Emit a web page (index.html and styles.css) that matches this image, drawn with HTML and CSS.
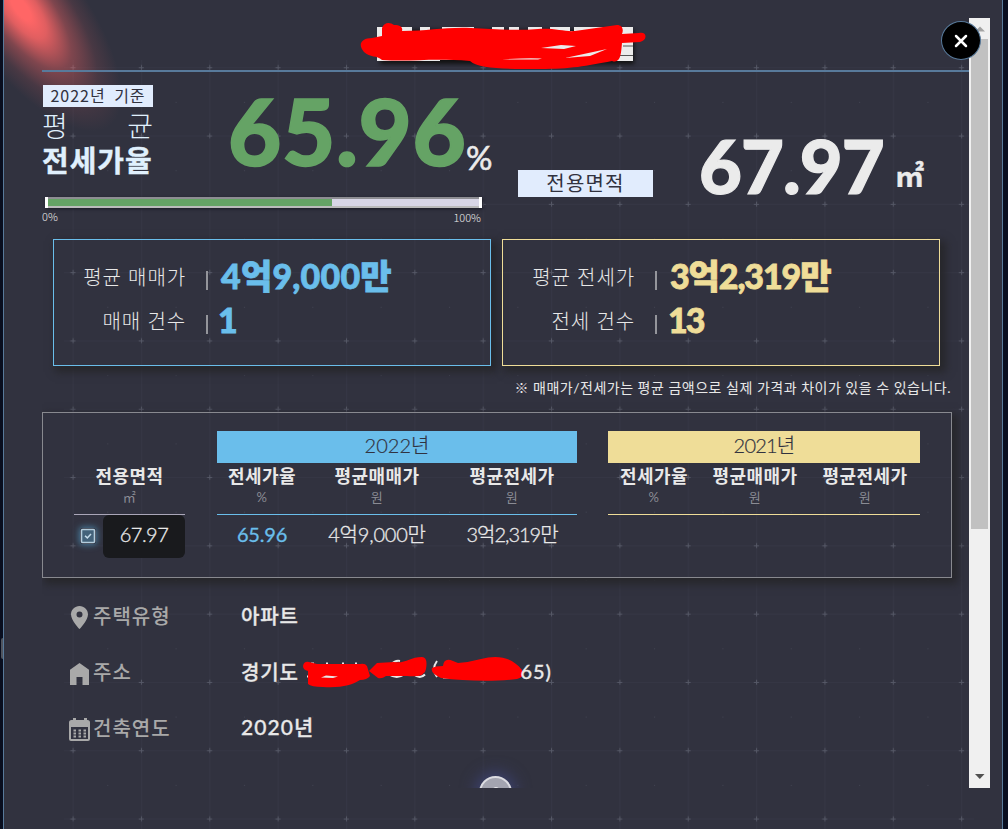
FILE: index.html
```html
<!DOCTYPE html>
<html lang="ko">
<head>
    <meta charset="UTF-8">
    <meta name="viewport" content="width=device-width, initial-scale=1.0">
    <title>전세가율</title>
    <link rel="stylesheet" href="styles.css">
</head>
<body>
    <div class="modal">
        <svg class="grid-bg" width="998" height="829">
            <defs>
                <pattern id="grid" x="34.9" y="33.6" width="68.35" height="68.3" patternUnits="userSpaceOnUse">
                    <path d="M34.2 0v68.3M0 34.1h68.35" stroke="#8b92b5" stroke-opacity=".05"/>
                    <path d="M34.2 31.5v5M31.5 34.1h5" stroke="#a0a5b8" stroke-opacity=".3"/>
                    <path d="M0 0h1v1h-1z" fill="#a0a5b8" fill-opacity=".15"/>
                </pattern>
            </defs>
            <rect x="60" y="60" width="910" height="769" fill="url(#grid)"/>
        </svg>
        <div class="glow"></div>

        <div class="scroll-area">
            <div class="content">
                <header class="title">
                    <svg class="title-mark" width="290" height="46" viewBox="0 0 290 46">
                        <path class="mark-shadow" d="M20 8h254v34H20z"/>
                        <path d="M17 5h35v4h8V5h10v4h12V5h32v4h18V5h12v4h5V5h10v4h9V5h14v4h8V5h20v4h4V5h59v34H170v-1h-90v1H17z" fill="#ebebeb"/>
                        <path d="M263 24h10M257 33.500h16" stroke="#555"/>
                        <path class="scribble" d="M22 6C24 0 30 0 34 3C41 3 43 6 42 9C70 9 84 5 111 6C135 7 155 9 178 7C195 6 205 10 215 9L257 3C262 3 264 7 262 12L279 11C287 9 288 18 280 20L262 21C261 31 261 42 252 39C226 44 211 47 180 47C145 47 119 47 110 39C70 36 52 40 22 38C17 33 10 36 4 30C-3 22 2 16 12 16L22 14Z"/>
                        <path d="M181 26l20-3 15 1-12 3zM142 37.500q25-2 40-1l-4 1zM205 36l42-9-17 7z" fill="#ebebeb"/>
                    </svg>
                </header>

                <section class="summary">
                    <div class="rate">
                        <div class="rate-top">
                            <div class="rate-label">
                                <span class="base-year">2022년 기준</span>
                                <span class="avg"><span>평</span><span>균</span></span>
                                <strong>전세가율</strong>
                            </div>
                            <div class="rate-value">65.96</div>
                            <span class="percent">%</span>
                        </div>
                        <div class="bar"><div class="bar-fill" style="width: 65.96%"></div></div>
                        <div class="bar-scale"><span>0%</span><span class="max">100%</span></div>
                    </div>
                    <div class="area">
                        <span class="area-label">전용면적</span>
                        <span class="area-value">67.97</span>
                        <span class="area-unit">㎡</span>
                    </div>
                </section>

                <section class="cards">
                    <div class="card blue">
                        <div class="card-row"><span class="name">평균 매매가</span><i></i><b>4억9,000만</b></div>
                        <div class="card-row"><span class="name">매매 건수</span><i></i><b class="single">1</b></div>
                    </div>
                    <div class="card yellow">
                        <div class="card-row"><span class="name">평균 전세가</span><i></i><b class="jeonse">3억2,319만</b></div>
                        <div class="card-row"><span class="name">전세 건수</span><i></i><b class="count">13</b></div>
                    </div>
                </section>
                <p class="notice">※ 매매가/전세가는 평균 금액으로 실제 가격과 차이가 있을 수 있습니다.</p>

                <section class="history">
                    <div class="group group-area">
                        <div class="year"></div>
                        <div class="cols"><div class="col">전용면적<small>㎡</small></div></div>
                        <div class="values">
                            <span class="check">
                                <svg width="16" height="16" viewBox="0 0 16 16"><rect x="1.5" y="1.5" width="13" height="13" rx="1" fill="#43627a" stroke="#b4cddd" stroke-width="1.6"/><path d="M5 7.7l2.3 2.2L11 6" fill="none" stroke="#c5dbea" stroke-width="1.5"/></svg>
                            </span>
                            <span class="selected">67.97</span>
                        </div>
                    </div>
                    <div class="group group-2022">
                        <div class="year">2022년</div>
                        <div class="cols">
                            <div class="col">전세가율<small>%</small></div>
                            <div class="col">평균매매가<small>원</small></div>
                            <div class="col">평균전세가<small>원</small></div>
                        </div>
                        <div class="values">
                            <span class="active">65.96</span>
                            <span>4억9,000만</span>
                            <span class="jeonse-cell">3억2,319만</span>
                        </div>
                    </div>
                    <div class="group group-2021">
                        <div class="year">2021년</div>
                        <div class="cols">
                            <div class="col">전세가율<small>%</small></div>
                            <div class="col">평균매매가<small>원</small></div>
                            <div class="col">평균전세가<small>원</small></div>
                        </div>
                        <div class="values"></div>
                    </div>
                </section>

                <dl class="info">
                    <div class="info-row">
                        <dt>
                            <svg width="24" height="26" viewBox="0 0 24 26"><path fill-rule="evenodd" d="M12.500 2C7.800 2 4 5.700 4 10.400 4 16.300 12.500 25 12.500 25S21 16.300 21 10.400C21 5.700 17.200 2 12.500 2zm0 5.500a3 3 0 1 1 0 6 3 3 0 0 1 0-6z"/></svg>
                            주택유형
                        </dt>
                        <dd>아파트</dd>
                    </div>
                    <div class="info-row">
                        <dt>
                            <svg width="24" height="26" viewBox="0 0 24 26"><path d="M12.500 3L3 9.800V25h6.500v-8h6v8H22V9.800z"/></svg>
                            주소
                        </dt>
                        <dd class="address">
                            경기도
                            <svg width="222" height="34" viewBox="0 0 222 34">
                                <path d="M4 20.500h3M8 7.500h3m12 0h2m14 0h2m11 0h2M20 21h20" stroke="#e8e8e8" stroke-width="2"/>
                                <path d="M86 18.500q8 5 15 0M111 18.500q6 5 11 0M89 8q3-4 8-3" fill="none" stroke="#e8e8e8" stroke-width="2"/>
                                <path d="M134 5q-6 8 0 16M140 21.500h13" fill="none" stroke="#e8e8e8" stroke-width="2"/>
                                <path class="scribble" d="M6 6Q1 5 0 10Q0 14 5 15Q5 23 5 28Q8 31 20 31C39 32 49 29 57 24Q64 24 67 20L64 10Q62 7 57 8L14 8ZM66 15L75 22Q79 23 83 20L104 20Q122 22 123 13Q125 1 119 1C107 1 102 8 91 6L74 7ZM129 12Q132 10 140 10Q141 1 150 5L155 7Q167 6 178 3C193-1 208 0 219 14Q223 20 214 23C191 26 161 25 138 22Q127 17 129 12Z"/>
                                <path d="M18 21.500l5-2 12 1-5 1.500z" fill="#e8e8e8"/>
                            </svg>
                            <span>65)</span>
                        </dd>
                    </div>
                    <div class="info-row">
                        <dt>
                            <svg width="24" height="26" viewBox="0 0 24 26"><path fill-rule="evenodd" d="M4.500 4H6V2h3v2h8V2h3v2h.5Q23 4 23 6.500V23q0 2-2 2H4q-2 0-2-2V6.500Q2 4 4.500 4zM4 11v12h17V11z"/><path d="M6.500 14.500h2.500m2.500 0h2.500m2.500 0h2.500M6.500 17.500h2.500m2.500 0h2.500m2.500 0h2.500M6.500 20.500h2.500m2.500 0h2.500m2.500 0h2.500" stroke="#a9a9a9" stroke-width="2"/></svg>
                            건축연도
                        </dt>
                        <dd class="built">2020년</dd>
                    </div>
                </dl>
                <div class="more"><svg width="14" height="8" viewBox="0 0 14 8"><path d="M3 4q4-4 8 0" fill="none" stroke="#fff" stroke-width="1.500"/></svg></div>
            </div>
            <div class="scrollbar">
                <svg width="21" height="21" viewBox="0 0 21 21"><path d="M6 13.500l5-5 5 5z" fill="#a3a3a3"/></svg>
                <div class="thumb"></div>
                <svg class="down" width="21" height="21" viewBox="0 0 21 21"><path d="M6 7h9.500l-4.700 5z" fill="#505050"/></svg>
            </div>
        </div>
        <button class="close" aria-label="닫기">
            <svg width="14" height="14" viewBox="0 0 14 14"><path d="M2 2l10 10M12 2L2 12" stroke="#fff" stroke-width="2.500" stroke-linecap="round"/></svg>
        </button>
    </div>
    <div class="side-tab"></div>
</body>
</html>
```
FILE: styles.css
```css
* {
    box-sizing: border-box;
}
body {
    margin: 0;
    height: 829px;
    overflow: hidden;
    position: relative;
    background: #090e1f;
    color: #e8e8e8;
    font-family: Lato, "Noto Sans CJK KR", sans-serif;
}
.modal {
    position: relative;
    width: 1000px;
    height: 829px;
    margin-left: 3px;
    padding: 18px 12px 0 38px;
    background: #31323f;
    border: solid #587a9b;
    border-width: 0 1px;
    overflow: hidden;
}
.grid-bg {
    position: absolute;
    left: 0;
    top: 0;
}
.glow {
    position: absolute;
    left: -42px;
    top: -140px;
    width: 118px;
    height: 296px;
    transform: rotate(-37deg);
    background: radial-gradient(closest-side, #ff6666 10%, rgba(255, 102, 102, 0.85) 25%, rgba(255, 102, 102, 0.38) 50%, rgba(240, 100, 100, 0.12) 76%, transparent);
}
.side-tab {
    position: absolute;
    left: 1px;
    top: 638px;
    width: 2px;
    height: 21px;
    background: #50545e;
    border-radius: 2px 0 0 2px;
}
.scroll-area {
    position: relative;
    display: flex;
    height: 770px;
    overflow: hidden;
}
.content {
    width: 927px;
    flex: none;
}
.scribble {
    fill: #ff0000;
}

/* title */
.title {
    height: 54px;
    padding: 4px 0 0 318px;
    border-bottom: 2px solid #587a9b;
}
.title-mark {
    display: block;
    overflow: visible;
}
.mark-shadow {
    fill: #111;
    filter: blur(2px);
}

/* summary */
.summary {
    display: flex;
    height: 167px;
    padding-top: 13px;
}
.rate {
    width: 476px;
}
.rate-top {
    display: flex;
    height: 111px;
}
.rate-label {
    display: flex;
    flex-direction: column;
    width: 111px;
    color: #e0f0fd;
}
.base-year {
    height: 22px;
    margin-left: 1px;
    background: #e1ecfd;
    color: #31323f;
    font-family: "Noto Sans CJK KR", sans-serif;
    font-size: 16px;
    line-height: 21px;
    text-align: center;
    letter-spacing: 1px;
    word-spacing: 3px;
}
.avg {
    display: flex;
    justify-content: space-between;
    font-size: 28px;
    font-weight: 300;
    line-height: 38px;
    height: 36px;
}
.rate-label strong {
    font-size: 29px;
    line-height: 35px;
    letter-spacing: 1px;
    font-weight: 700;
    -webkit-text-stroke: 0.4px;
}
.rate-value {
    width: 311px;
    padding-left: 75px;
    color: #65a365;
    font-size: 92px;
    font-weight: 900;
    line-height: 92px;
    letter-spacing: 0.6px;
    white-space: nowrap;
    -webkit-text-stroke: 1.5px;
}
.percent {
    padding-top: 52px;
    margin-left: 2px;
    color: #ebebeb;
    font-size: 33px;
    line-height: 40px;
    -webkit-text-stroke: 0.6px;
}
.bar {
    width: 437px;
    height: 11px;
    margin: 1px 0 0 3px;
    padding: 2px 0;
    border: solid #fff;
    border-width: 0 3px;
    background: linear-gradient(#8e8e93 2px, #d8d6e6 2px, #d8d6e6 9px, #bbb 9px);
    box-shadow: 1px 1px 3px #1c1c25;
}
.bar-fill {
    height: 7px;
    background: #65a365;
}
.bar-scale {
    display: flex;
    justify-content: space-between;
    width: 439px;
    font-family: "Noto Sans CJK KR", sans-serif;
    font-size: 11px;
    font-weight: 300;
    line-height: 17px;
}
.bar-scale .max {
    padding-top: 1px;
}
.area {
    display: flex;
}
.area-label {
    width: 135px;
    height: 27px;
    margin-top: 85px;
    background: #e1ecfd;
    color: #31323f;
    font-size: 20px;
    line-height: 26px;
    text-align: center;
    letter-spacing: 1.2px;
}
.area-value {
    flex: none;
    width: 242px;
    padding: 44px 0 0 46px;
    color: #ebebeb;
    font-size: 74px;
    font-weight: 900;
    line-height: 74px;
    letter-spacing: -0.9px;
    -webkit-text-stroke: 1.2px;
}
.area-unit {
    padding-top: 71px;
    color: #ebebeb;
    font-size: 29px;
    font-weight: 700;
    line-height: 40px;
    -webkit-text-stroke: 0.4px;
}

/* price cards */
.cards {
    display: flex;
    gap: 11px;
    margin-left: 11px;
}
.card {
    width: 438px;
    height: 127px;
    padding-top: 15px;
    border: 1px solid;
    box-shadow: 4px 4px 8px 2px #27272b;
}
.blue {
    color: #6abeeb;
}
.yellow {
    color: #efdd98;
}
.card-row {
    display: flex;
    align-items: center;
    height: 44px;
}
.name {
    width: 132px;
    margin-top: -2px;
    color: #e8e8e8;
    font-size: 20px;
    font-weight: 300;
    text-align: right;
    letter-spacing: 0.9px;
}
.card-row i {
    width: 2px;
    height: 19px;
    margin: 7px 13px 0 20px;
    background: #94959b;
}
.card-row b {
    margin-top: -2px;
    font-size: 34px;
    font-weight: 900;
    line-height: 44px;
    letter-spacing: 0.2px;
    white-space: nowrap;
    -webkit-text-stroke: 0.8px;
}
.card-row .jeonse {
    letter-spacing: -1.1px;
}
.card-row .single {
    margin-left: -3px;
}
.card-row .count {
    margin-left: -2px;
    letter-spacing: -2px;
}
.notice {
    width: 909px;
    height: 46px;
    margin: 0;
    padding-top: 10px;
    font-size: 14px;
    line-height: 24px;
    letter-spacing: 0.5px;
    text-align: right;
    white-space: nowrap;
}

/* yearly table */
.history {
    display: flex;
    width: 910px;
    height: 166px;
    padding: 18px 0 0 31px;
    border: 1px solid #88898f;
    box-shadow: 4px 4px 8px 2px #27272b;
}
.group-area {
    width: 111px;
    margin-right: 32px;
}
.group-2022 {
    width: 360px;
    margin-right: 31px;
}
.group-2021 {
    width: 312px;
}
.year {
    height: 32px;
    color: #31323f;
    font-size: 20px;
    font-weight: 300;
    line-height: 29px;
    text-align: center;
    -webkit-text-stroke: 0.2px;
}
.group-2022 .year {
    background: #6abeeb;
}
.group-2021 .year {
    background: #efdd98;
    letter-spacing: -0.8px;
}
.cols {
    display: grid;
    height: 52px;
    border-bottom: 1px solid #aaa6b8;
}
.group-2022 .cols {
    grid-template-columns: 90px 140px 130px;
    border-color: #6abeeb;
}
.group-2021 .cols {
    grid-template-columns: 92px 110px 110px;
    border-color: #efdd98;
}
.col {
    font-size: 18px;
    font-weight: 700;
    line-height: 27px;
    letter-spacing: 0.4px;
    text-align: center;
    white-space: nowrap;
}
.col small {
    display: block;
    color: #8a8b94;
    font-size: 13px;
    font-weight: 400;
    line-height: 14px;
}
.values {
    display: grid;
    height: 43px;
    font-size: 20px;
    font-weight: 300;
    line-height: 39px;
    letter-spacing: -0.2px;
    text-align: center;
    white-space: nowrap;
    -webkit-text-stroke: 0.3px;
}
.group-area .values {
    grid-template-columns: 29px 82px;
}
.group-2022 .values {
    grid-template-columns: 90px 140px 130px;
}
.check svg {
    display: block;
    margin: 13px 0 0 6px;
    border-radius: 3px;
    box-shadow: 0 0 6px 1px #47799a;
}
.selected {
    background: #191a1d;
    border-radius: 6px;
}
.values .selected {
    letter-spacing: -0.5px;
}
.jeonse-cell {
    letter-spacing: -1px;
}
.active {
    color: #6abeeb;
    font-weight: 400;
}

/* building info */
.info {
    margin: 9px 0 0 25px;
}
.info-row {
    display: flex;
    align-items: center;
    height: 56px;
}
.info dt {
    display: flex;
    align-items: center;
    gap: 2px;
    width: 174px;
    color: #a9a9a9;
    font-size: 20px;
    font-weight: 500;
    letter-spacing: 1px;
}
.info dt svg {
    fill: #a9a9a9;
    margin-top: 3px;
}
.info dd {
    margin: 0;
    font-size: 20px;
    font-weight: 500;
    letter-spacing: 0.8px;
    -webkit-text-stroke: 0.3px;
}
.address {
    display: flex;
    align-items: center;
}
.address svg {
    margin: 3px -4px 0 4px;
}
.info .built {
    margin-top: -2px;
    font-size: 21px;
    letter-spacing: 1.1px;
}
.more {
    width: 33px;
    height: 33px;
    margin: 21px 0 0 437px;
    padding: 8px 0 0 8px;
    background: #a3a4b0;
    border: 2px solid #dcdce2;
    border-radius: 50%;
    box-shadow: 0 0 16px 3px #3d4374;
}
.more svg {
    display: block;
}

/* scrollbar */
.scrollbar {
    display: flex;
    flex-direction: column;
    width: 21px;
    height: 770px;
    background: #f0f0f0;
}
.scrollbar svg {
    flex: none;
}
.thumb {
    height: 490px;
    margin: 0 2px;
    background: #c1c1c1;
}
.scrollbar .down {
    margin-top: auto;
}
.close {
    position: absolute;
    left: 937px;
    top: 21px;
    display: flex;
    align-items: center;
    justify-content: center;
    width: 40px;
    height: 39px;
    padding: 0;
    background: #000;
    border: 1px solid #587a9b;
    border-radius: 50%;
}
```
